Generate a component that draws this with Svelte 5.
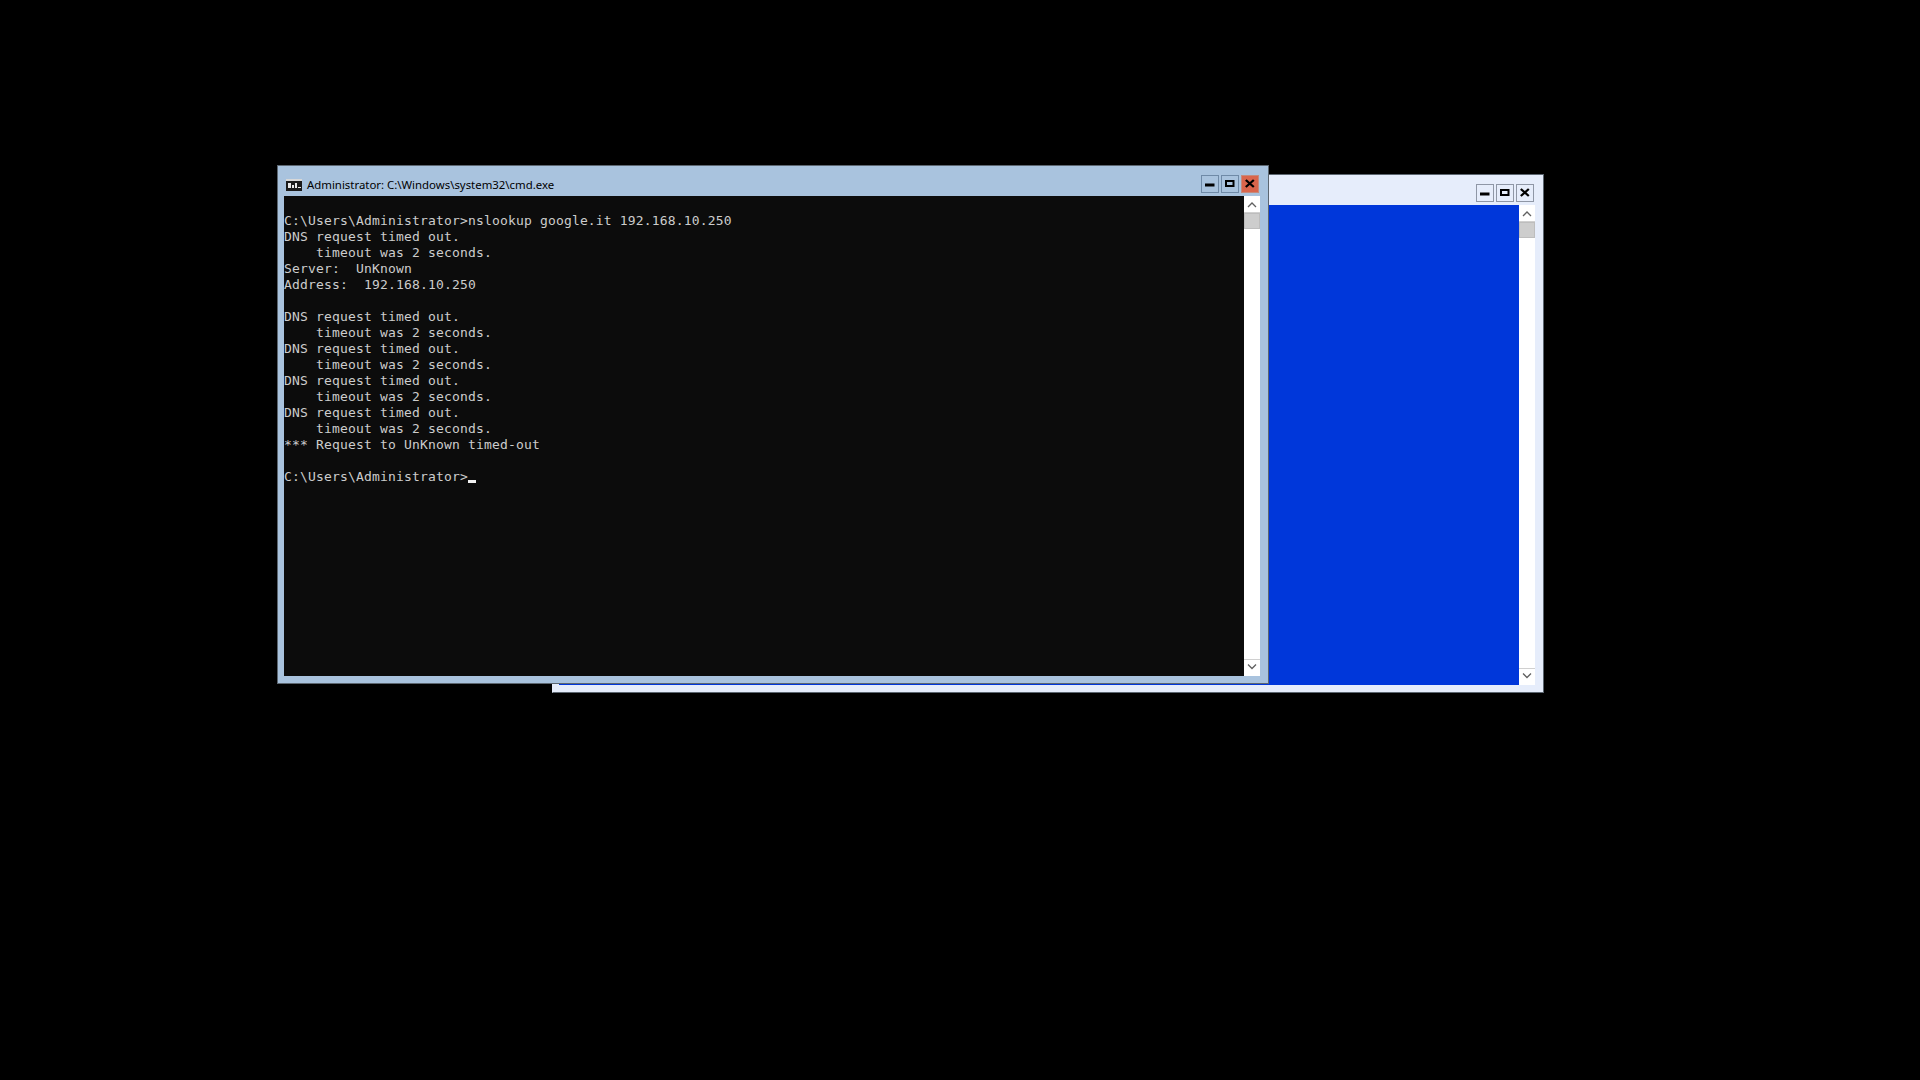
<script lang="ts">
	const lines = [
		'',
		'C:\\Users\\Administrator>nslookup google.it 192.168.10.250',
		'DNS request timed out.',
		'    timeout was 2 seconds.',
		'Server:  UnKnown',
		'Address:  192.168.10.250',
		'',
		'DNS request timed out.',
		'    timeout was 2 seconds.',
		'DNS request timed out.',
		'    timeout was 2 seconds.',
		'DNS request timed out.',
		'    timeout was 2 seconds.',
		'DNS request timed out.',
		'    timeout was 2 seconds.',
		'*** Request to UnKnown timed-out',
		''
	];
	const prompt = 'C:\\Users\\Administrator>';
</script>

{#snippet buttons(close: string)}
	<div class="buttons">
		<div class="btn">
			<svg width="18" height="18" viewBox="0 0 18 18"><rect x="4" y="8.5" width="9.5" height="3" fill="#000" /></svg>
		</div>
		<div class="btn">
			<svg width="18" height="18" viewBox="0 0 18 18"><rect x="5" y="6" width="7.5" height="5" fill="none" stroke="#000" stroke-width="2" /></svg>
		</div>
		<div class="btn {close}">
			<svg width="18" height="18" viewBox="0 0 18 18"><path d="M4.8 5 12.8 12M12.8 5 4.8 12" fill="none" stroke="#000" stroke-width="2.3" /></svg>
		</div>
	</div>
{/snippet}

{#snippet scrollbar()}
	<div class="scrollbar">
		<div class="arrow">
			<svg width="16" height="16" viewBox="0 0 16 16"><path d="M4 11 8 7 12 11" fill="none" stroke="#606060" stroke-width="1.3" /></svg>
		</div>
		<div class="thumb"></div>
		<div class="track"></div>
		<div class="arrow down">
			<svg width="16" height="16" viewBox="0 0 16 16"><path d="M4 4.5 8 8.5 12 4.5" fill="none" stroke="#606060" stroke-width="1.3" /></svg>
		</div>
	</div>
{/snippet}

<div class="desktop">
	<div class="window back">
		<div class="titlebar">
			<div class="title"></div>
			{@render buttons('plain')}
		</div>
		<div class="body">
			<div class="console blue"></div>
			{@render scrollbar()}
		</div>
	</div>

	<div class="window front">
		<div class="titlebar">
			<svg class="icon" width="16" height="12" viewBox="0 0 16 12">
				<rect width="16" height="12" fill="#1a1a1a" />
				<rect x="0" y="0" width="16" height="2" fill="#d8d8d8" />
				<rect x="2" y="4" width="3" height="5" fill="#e8e8e8" />
				<rect x="6" y="6" width="2" height="3" fill="#e8e8e8" />
				<rect x="9" y="4" width="2" height="5" fill="#e8e8e8" />
				<rect x="12" y="8" width="3" height="1" fill="#e8e8e8" />
			</svg>
			<div class="title">Administrator: C:\Windows\system32\cmd.exe</div>
			{@render buttons('close')}
		</div>
		<div class="body">
			<div class="console text">
				{#each lines as line}
					<div class="line">{line}</div>
				{/each}
				<div class="line">{prompt}<span class="cursor"></span></div>
			</div>
			{@render scrollbar()}
		</div>
	</div>
</div>

<style>
	:global(body) {
		background: #000;
	}
	.desktop {
		position: relative;
		width: 1920px;
		height: 1080px;
		background: #000;
		overflow: hidden;
	}
	.window {
		position: absolute;
		display: flex;
		flex-direction: column;
		box-sizing: border-box;
		border: 1px solid #5c6670;
		padding: 0 8px 7px 6px;
	}
	.back {
		left: 552px;
		top: 174px;
		width: 992px;
		height: 519px;
		background: #e6edfb;
		border-left-color: #e6edfb;
	}
	.front {
		left: 277px;
		top: 165px;
		width: 992px;
		height: 519px;
		background: #a9c3de;
	}
	.titlebar {
		display: flex;
		align-items: center;
		box-sizing: border-box;
		height: 30px;
		padding-top: 6px;
		flex: none;
	}
	.icon {
		margin: 1px 5px 0 2px;
		flex: none;
	}
	.title {
		flex: 1;
		margin-top: 1px;
		font: 11.4px "Noto Sans", sans-serif;
		color: #000;
		white-space: nowrap;
	}
	.buttons {
		display: flex;
		gap: 2px;
		margin-right: 1px;
	}
	.btn {
		box-sizing: border-box;
		width: 18px;
		height: 18px;
		border: 1px solid #6f8aa7;
		display: flex;
		align-items: center;
		justify-content: center;
	}
	.btn svg {
		flex: none;
	}
	.btn.close {
		background: #d9654c;
		border-color: #c58a7c;
	}
	.back .btn {
		border-color: #8f97a6;
	}
	.body {
		flex: 1;
		display: flex;
		min-height: 0;
	}
	.console {
		flex: 1;
		min-width: 0;
	}
	.blue {
		background: #0037da;
	}
	.text {
		background: #0c0c0c;
		color: #cccccc;
		font: 13px/16px "DejaVu Sans Mono", monospace;
		letter-spacing: 0.17px;
		padding-top: 1px;
	}
	.line {
		height: 16px;
		white-space: pre;
	}
	.cursor {
		display: inline-block;
		width: 8px;
		height: 3px;
		background: #f2f2f2;
		vertical-align: -2px;
	}
	.scrollbar {
		width: 16px;
		flex: none;
		display: flex;
		flex-direction: column;
		background: #fff;
	}
	.arrow {
		height: 16px;
		flex: none;
		border-bottom: 1px solid #d0d0d0;
	}
	.arrow svg {
		display: block;
	}
	.arrow.down {
		border-bottom: 0;
		border-top: 1px solid #d0d0d0;
	}
	.thumb {
		box-sizing: border-box;
		height: 16px;
		flex: none;
		background: #cdcdcd;
		border: 1px solid #bdbdbd;
	}
	.track {
		flex: 1;
	}
</style>
